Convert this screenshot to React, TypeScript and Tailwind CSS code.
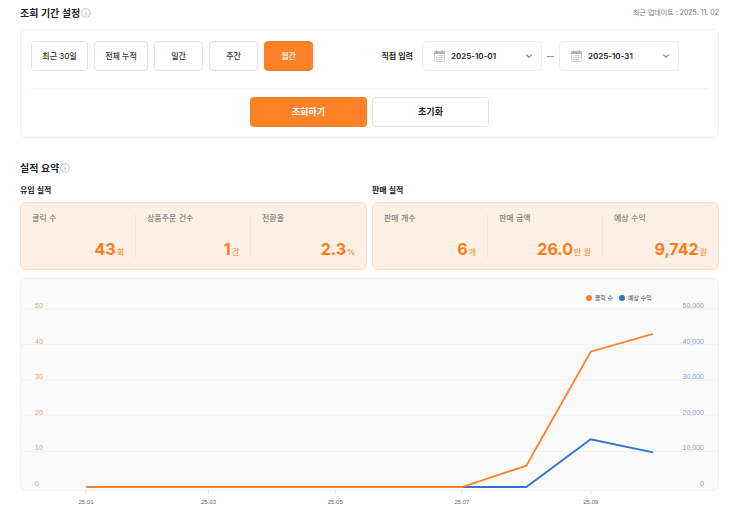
import { useState } from "react";
import clsx from "clsx";

type Metric = { label: string; value: string; unit: string };

const PERIODS = [
  { label: "최근 30일", width: "w-[57px]" },
  { label: "전체 누적", width: "w-[54px]" },
  { label: "일간", width: "w-[49px]" },
  { label: "주간", width: "w-[49px]" },
  { label: "월간", width: "w-[49px]" },
];

const INFLOW: Metric[] = [
  { label: "클릭 수", value: "43", unit: "회" },
  { label: "상품주문 건수", value: "1", unit: "건" },
  { label: "전환율", value: "2.3", unit: "%" },
];

const SALES: Metric[] = [
  { label: "판매 개수", value: "6", unit: "개" },
  { label: "판매 금액", value: "26.0", unit: "만 원" },
  { label: "예상 수익", value: "9,742", unit: "원" },
];

// day = days since the first month, so months keep their real length
const POINTS = [
  { day: 0, label: "25.01", clicks: 0, profit: 0 },
  { day: 31, label: "25.02", clicks: 0, profit: 0 },
  { day: 59, label: "25.03", clicks: 0, profit: 0 },
  { day: 90, label: "25.04", clicks: 0, profit: 0 },
  { day: 120, label: "25.05", clicks: 0, profit: 0 },
  { day: 151, label: "25.06", clicks: 0, profit: 0 },
  { day: 181, label: "25.07", clicks: 0, profit: 0 },
  { day: 212, label: "25.08", clicks: 6, profit: 0 },
  { day: 243, label: "25.09", clicks: 38, profit: 13400 },
  { day: 273, label: "25.10", clicks: 43, profit: 9742 },
];

const CHART_BOTTOM = 208;
const ROW_HEIGHT = 35.6;

const toX = (day: number) => 65 + (day / 273) * 567;
const toY = (ratio: number) => CHART_BOTTOM - ratio * ROW_HEIGHT * 5;

function InfoIcon() {
  return (
    <svg viewBox="0 0 10 10" className="size-[10px]" fill="none" aria-hidden="true">
      <circle cx="5" cy="5" r="4.3" stroke="#a8a8a8" strokeWidth="0.7" />
      <path d="M5 4.3v3.1" stroke="#999" strokeWidth="0.8" />
      <circle cx="5" cy="2.9" r="0.5" fill="#999" />
    </svg>
  );
}

function CalendarIcon() {
  return (
    <svg viewBox="0 0 11 12" className="h-3 w-[11px] shrink-0" aria-hidden="true">
      <rect x="0.4" y="1.4" width="10.2" height="10.2" rx="0.8" fill="#fff" stroke="#b9b9b9" strokeWidth="0.7" />
      <path d="M0.4 1.4h10.2v2.6H0.4z" fill="#b3b3b3" />
      <path d="M2.7 0.3v2M8.3 0.3v2" stroke="#a0a0a0" strokeWidth="0.9" />
      <path
        d="M4.6 5.8h1.2M6.6 5.8h1.2M8.5 5.8h0.9M2.2 7.7h1.2M4.6 7.7h1.2M6.6 7.7h1.2M8.5 7.7h0.9M2.2 9.6h1.2M4.6 9.6h1.2M6.6 9.6h1.2"
        stroke="#a8a8a8"
        strokeWidth="1.1"
      />
    </svg>
  );
}

function DateField({ label, value }: { label: string; value: string }) {
  return (
    <div className="flex h-[30px] w-[120px] items-center rounded-[4px] border border-[#efefef] bg-white pr-2 pl-[11px]">
      <CalendarIcon />
      <input
        type="text"
        aria-label={label}
        defaultValue={value}
        className="ml-[6px] w-0 min-w-0 flex-1 text-[8px] leading-3 font-semibold text-[#222] outline-none"
      />
      <button type="button" aria-label={`${label} 선택`}>
        <svg viewBox="0 0 8 8" className="size-2" fill="none" stroke="#8c8c8c" strokeWidth="1.1">
          <path d="M1.2 2.5 4 5.2l2.8-2.7" />
        </svg>
      </button>
    </div>
  );
}

function SectionTitle({ children }: { children: string }) {
  return (
    <h2 className="flex items-center gap-px text-[10px] leading-4 font-semibold text-[#222]">
      {children}
      <InfoIcon />
    </h2>
  );
}

function MetricCard({ title, metrics }: { title: string; metrics: Metric[] }) {
  return (
    <div>
      <h3 className="text-[8px] leading-3 font-semibold text-[#222]">{title}</h3>
      <dl className="mt-[6px] grid grid-cols-3 divide-x divide-[#fae3d5] rounded-md border border-[#ffdcc4] bg-[#fff0e6] py-[11px]">
        {metrics.map(({ label, value, unit }) => (
          <div key={label} className="flex h-11 flex-col justify-between px-[11px]">
            <dt className="text-[8px] leading-2 text-[#666]">{label}</dt>
            <dd className="flex items-baseline justify-end gap-px text-[#ff7a1a]">
              <span className="text-[16px] leading-4 font-bold">{value}</span>
              <span className="text-[8px] leading-3">{unit}</span>
            </dd>
          </div>
        ))}
      </dl>
    </div>
  );
}

function TrendChart() {
  const clicks = POINTS.map((p) => `${toX(p.day)},${toY(p.clicks / 50)}`).join(" ");
  const profit = POINTS.map((p) => `${toX(p.day)},${toY(p.profit / 50000)}`).join(" ");

  return (
    <div className="relative mt-2 rounded-md border border-[#f1f1f1] bg-[#fafafa]">
      <ul className="absolute top-[15px] right-[9.5%] flex gap-[6px] text-[6px] leading-2 text-[#444]">
        <li className="flex items-center gap-[3px]">
          <span className="size-[6px] rounded-full bg-[#ff8229]" />
          클릭 수
        </li>
        <li className="flex items-center gap-[3px]">
          <span className="size-[6px] rounded-full bg-[#2f74d6]" />
          예상 수익
        </li>
      </ul>
      <svg
        viewBox="0 0 697 211"
        className="block w-full overflow-visible font-['Liberation_Sans',sans-serif]"
        role="img"
        aria-label="월별 클릭 수와 예상 수익"
      >
        {[0, 1, 2, 3, 4, 5].map((row) => {
          const y = toY(row / 5);
          return (
            <g key={row} fontSize="7">
              {row > 0 && <path d={`M0 ${y}H697`} stroke="#f1f1f1" />}
              <text x="14" y={y - 1} fill="#ee9f6c">
                {row * 10}
              </text>
              <text x="683" y={y - 1} textAnchor="end" fill="#869fca">
                {(row * 10000).toLocaleString("en-US")}
              </text>
            </g>
          );
        })}
        {POINTS.filter((_, i) => i % 2 === 0).map(({ day, label }) => (
          <g key={label}>
            <path d={`M${toX(day)} 212v3`} stroke="#e0e0e0" />
            <text x={toX(day)} y="225" textAnchor="middle" fontSize="6" fill="#666">
              {label}
            </text>
          </g>
        ))}
        <polyline points={profit} fill="none" stroke="#2f74d6" strokeWidth="1.8" />
        <polyline points={clicks} fill="none" stroke="#ff8229" strokeWidth="1.8" />
      </svg>
    </div>
  );
}

export default function App() {
  const [period, setPeriod] = useState("월간");

  return (
    <main className="min-h-screen bg-white px-5 pt-[5px] pb-8 font-['Inter','Noto_Sans_CJK_KR',sans-serif] text-[#222]">
      <header className="flex items-center justify-between pr-1">
        <SectionTitle>조회 기간 설정</SectionTitle>
        <p className="text-[7px] leading-4 text-[#777]">최근 업데이트 : 2025. 11. 02</p>
      </header>

      <form
        className="mt-2 mr-1 rounded-md border border-[#f1f1f1] px-[10px] pt-[11px] pb-[10px]"
        onSubmit={(e) => e.preventDefault()}
      >
        <div className="grid grid-cols-2 items-center">
          <div className="flex gap-[6px]">
            {PERIODS.map(({ label, width }) => (
              <button
                key={label}
                type="button"
                aria-pressed={period === label}
                onClick={() => setPeriod(label)}
                className={clsx(
                  "h-[30px] rounded-[4px] border text-[8px] font-medium whitespace-nowrap",
                  width,
                  period === label
                    ? "border-[#ff8229] bg-[#ff8229] text-white"
                    : "border-[#e3e3e3] bg-white text-[#333]"
                )}
              >
                {label}
              </button>
            ))}
          </div>
          <fieldset className="flex items-center pl-3">
            <legend className="float-left mr-[9px] text-[8px] leading-3 font-semibold whitespace-nowrap">
              직접 입력
            </legend>
            <DateField label="시작일" value="2025-10-01" />
            <span className="mx-[5px] h-px w-[7px] bg-[#999]" />
            <DateField label="종료일" value="2025-10-31" />
          </fieldset>
        </div>
        <div className="mt-[17px] flex justify-center gap-[5px] border-t border-[#f5f5f5] pt-2">
          <button type="submit" className="h-[30px] w-[117px] rounded-[4px] bg-[#ff8229] text-[9px] font-semibold text-white">
            조회하기
          </button>
          <button type="reset" className="h-[30px] w-[117px] rounded-[4px] border border-[#e3e3e3] bg-white text-[9px] font-semibold">
            초기화
          </button>
        </div>
      </form>

      <section className="mt-[22px] mr-1">
        <SectionTitle>실적 요약</SectionTitle>
        <div className="mt-2 grid grid-cols-2 gap-[5px]">
          <MetricCard title="유입 실적" metrics={INFLOW} />
          <MetricCard title="판매 실적" metrics={SALES} />
        </div>
        <TrendChart />
      </section>
    </main>
  );
}
